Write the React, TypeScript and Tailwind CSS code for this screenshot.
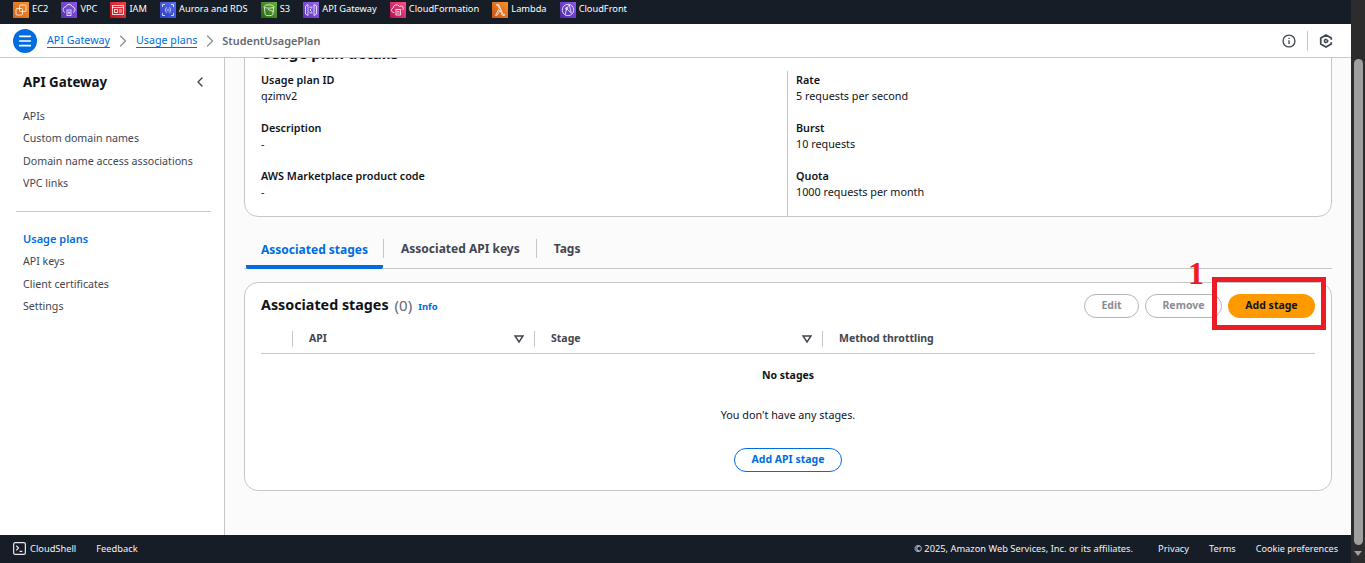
import { ChevronRight, ChevronLeft, Menu } from "lucide-react";

const services = [
  { name: "EC2", bg: "bg-linear-to-tr from-[#d0601c] to-[#f79327]", icon: "ec2" },
  { name: "VPC", bg: "bg-linear-to-tr from-[#5a30b5] to-[#8a5ae8]", icon: "vpc" },
  { name: "IAM", bg: "bg-linear-to-tr from-[#bd0816] to-[#f0404c]", icon: "iam" },
  { name: "Aurora and RDS", bg: "bg-linear-to-tr from-[#2e3fc0] to-[#5a6cf0]", icon: "rds" },
  { name: "S3", bg: "bg-linear-to-tr from-[#1b660f] to-[#6cae3e]", icon: "s3" },
  { name: "API Gateway", bg: "bg-linear-to-tr from-[#5a30b5] to-[#9a6af0]", icon: "api" },
  { name: "CloudFormation", bg: "bg-linear-to-tr from-[#b0084d] to-[#ff4f8b]", icon: "cf" },
  { name: "Lambda", bg: "bg-linear-to-tr from-[#c8511b] to-[#f79327]", icon: "lambda" },
  { name: "CloudFront", bg: "bg-linear-to-tr from-[#4d27a8] to-[#8a5ae8]", icon: "front" },
];

function ServiceGlyph({ icon }: { icon: string }) {
  const common = { fill: "none", stroke: "white", strokeWidth: 0.9, strokeOpacity: 0.85 };
  return (
    <svg viewBox="0 0 16 16" className="h-4 w-4" {...common}>
      {icon === "ec2" && (
        <>
          <rect x="6.500" y="3" width="6.500" height="6.500" rx="1" />
          <rect x="3" y="6.500" width="6.500" height="6.500" rx="1" />
        </>
      )}
      {icon === "vpc" && (
        <>
          <path d="M4 10.500a3 3 0 0 1 .8-5.800 3.500 3.500 0 0 1 6.600 0 3 3 0 0 1 .6 5.800" />
          <rect x="6" y="8" width="4" height="5.500" />
          <path d="M7.300 9.500v2.500M8.700 9.500v2.500" />
        </>
      )}
      {icon === "iam" && (
        <>
          <rect x="2.500" y="3.500" width="11" height="9" />
          <path d="M2.500 5.500h11" />
          <rect x="4.500" y="7.500" width="3" height="3" />
          <path d="M9 8h3M9 10h3" />
        </>
      )}
      {icon === "rds" && (
        <>
          <path d="M2.500 5V2.500H5M11 2.500h2.500V5M13.500 11v2.500H11M5 13.500H2.500V11" />
          <path d="M6.500 5.500C5.500 5.500 6.200 8 5.300 8c.9 0 .2 2.500 1.200 2.500M9.500 5.500c1 0 .3 2.500 1.200 2.500-.9 0-.2 2.500-1.200 2.500" />
          <path d="M8 6.800v2.400" />
        </>
      )}
      {icon === "s3" && (
        <>
          <ellipse cx="8" cy="4.500" rx="4.800" ry="1.700" />
          <path d="M3.200 4.500l1 8a3.800 1.200 0 0 0 7.600 0l1-8" />
          <path d="M7 7.500l5.500 2" />
        </>
      )}
      {icon === "api" && (
        <>
          <path d="M2.500 4l2.500-1.500v11L2.500 12zM13.500 4L11 2.500v11l2.500-1.500z" />
          <path d="M7.200 4.500v1.500M7.200 10v1.500M8.800 4.500v1.500M8.800 10v1.500M8.500 6.500L7 8l1.500 1.500" />
        </>
      )}
      {icon === "cf" && (
        <>
          <path d="M4.500 10.500H3.500a2.300 2.300 0 0 1-.3-4.500 3.300 3.300 0 0 1 6.200-1.500 2.500 2.500 0 0 1 3.500 3.500" />
          <rect x="6" y="7.500" width="4.500" height="5.500" />
          <path d="M7 9.300h2.500M7 11h2.500" />
        </>
      )}
      {icon === "lambda" && <path d="M3.500 13.300l3.800-6.800-1.500-3.300H4.500V2.700h2.300l4.200 9.600h1.500v1H10.300L8 8l-2.800 5.300z" />}
      {icon === "front" && (
        <>
          <circle cx="8" cy="8" r="5.700" />
          <path d="M5.200 12.800L6.500 6.500l2.800-3.500 2 8M6.500 6.500l4.800 4.500" />
          <circle cx="6.500" cy="6.500" r="1" />
        </>
      )}
    </svg>
  );
}

function Field({ label, value }: { label: string; value: string }) {
  return (
    <div className="h-[48px]">
      <div className="text-[10.800px] leading-[16px] font-semibold text-[#0f141a]">{label}</div>
      <div className="text-[10.800px] leading-[16px] text-[#0f141a]">{value}</div>
    </div>
  );
}

function NavLink({ label, active }: { label: string; active?: boolean }) {
  return (
    <div
      className={`leading-[16px] ${active ? "text-[11px] font-semibold text-[#006ce0]" : "text-[10.650px] text-[#424650]"}`}
    >
      {label}
    </div>
  );
}

function SortCaret() {
  return (
    <svg viewBox="0 0 10 8" className="h-2 w-2.5" fill="none" stroke="#424650" strokeWidth="1.500">
      <path d="M1 1h8L5 7z" />
    </svg>
  );
}

export default function App() {
  return (
    <div className="flex h-[563px] w-[1365px] overflow-hidden bg-[#fbfbfb] font-['Noto_Sans','Open_Sans',sans-serif]">
      <div className="flex h-full w-[1351px] flex-col">
        {/* Favorites bar */}
        <div className="flex h-[24px] shrink-0 items-center gap-[13.100px] bg-[#161d26] pl-[13px] pb-[5px] pt-[1px]">
          {services.map((s) => (
            <div key={s.name} className="flex items-center gap-[3px]">
              <span className={`flex h-4 w-4 items-center justify-center ${s.bg}`}>
                <ServiceGlyph icon={s.icon} />
              </span>
              <span className="mb-[3px] text-[9.250px] leading-[14px] text-white">{s.name}</span>
            </div>
          ))}
        </div>

        {/* Breadcrumbs */}
        <div className="flex h-[34px] shrink-0 items-center border-b border-[#c6c6cd] bg-white pl-[13px] pr-[18px]">
          <span className="mr-[10px] flex h-6 w-6 items-center justify-center rounded-full bg-[#006ce0]">
            <Menu className="h-4 w-4 text-white" strokeWidth={2.5} />
          </span>
          <span className="border-b border-[#006ce0] text-[10.700px] leading-[14px] text-[#006ce0]">API Gateway</span>
          <ChevronRight className="mx-[3px] h-5 w-5 text-[#8c8c94]" strokeWidth={1.500} />
          <span className="border-b border-[#006ce0] text-[10.700px] leading-[14px] text-[#006ce0]">Usage plans</span>
          <ChevronRight className="ml-[3px] mr-[2px] h-5 w-5 text-[#8c8c94]" strokeWidth={1.500} />
          <span className="text-[10.900px] leading-[14px] font-semibold text-[#656871]">StudentUsagePlan</span>
          <div className="ml-auto flex items-center">
            <svg viewBox="0 0 16 16" className="h-[14px] w-[14px]" fill="none" stroke="#424650" strokeWidth="1.500">
              <circle cx="8" cy="8" r="6.800" />
              <path d="M8 7v4.500M8 4.300v1.500" />
            </svg>
            <span className="mx-[11px] h-[20px] w-px bg-[#c6c6cd]" />
            <svg viewBox="0 0 16 16" className="h-[14px] w-[14px]" fill="none" stroke="#424650" strokeWidth="2">
              <path d="M14 6.500V4.700L8 1.200 2 4.700v6.600l6 3.500 6-3.500V9.500" />
              <path d="M8 5.500a2.500 2.500 0 1 0 0 5l2.500-1.500V7z" fill="#424650" strokeWidth="0.500" />
              <circle cx="8" cy="8" r="0.900" fill="white" stroke="none" />
            </svg>
          </div>
        </div>

        <div className="flex min-h-0 flex-1">
          {/* Sidebar */}
          <aside className="w-[225px] shrink-0 border-r border-[#c6c6cd] bg-white pl-[16px] pr-[13px]">
            <div className="flex items-center justify-between pl-[7px] pt-[14px] pr-[3px]">
              <span className="text-[13.300px] leading-[20px] font-bold text-[#0f141a]">API Gateway</span>
              <ChevronLeft className="h-4 w-4 text-[#424650]" strokeWidth={2} />
            </div>
            <div className="flex flex-col gap-[6.330px] pl-[7px] pt-[16px]">
              <NavLink label="APIs" />
              <NavLink label="Custom domain names" />
              <NavLink label="Domain name access associations" />
              <NavLink label="VPC links" />
            </div>
            <div className="mt-[20px] h-px bg-[#c6c6cd]" />
            <div className="flex flex-col gap-[6.330px] pl-[7px] pt-[19px]">
              <NavLink label="Usage plans" active />
              <NavLink label="API keys" />
              <NavLink label="Client certificates" />
              <NavLink label="Settings" />
            </div>
          </aside>

          {/* Main */}
          <main className="min-w-0 flex-1 overflow-hidden px-[19px]">
            <div className="relative -mt-[16px] flex h-[175px] rounded-b-[14px] border border-[#c6c6cd] bg-white pl-[16px]">
              <div className="absolute top-[1px] left-[16px] text-[15px] leading-[18px] font-bold text-[#0f141a]">
                Usage plan details
              </div>
              <div className="mt-[28px] w-[527px] border-r border-[#c6c6cd] pt-[1px]">
                <Field label="Usage plan ID" value="qzimv2" />
                <Field label="Description" value="-" />
                <Field label="AWS Marketplace product code" value="-" />
              </div>
              <div className="mt-[28px] pl-[8px] pt-[1px]">
                <Field label="Rate" value="5 requests per second" />
                <Field label="Burst" value="10 requests" />
                <Field label="Quota" value="1000 requests per month" />
              </div>
            </div>

            {/* Tabs */}
            <div className="mt-[16px] flex h-[36px] border-b border-[#c6c6cd] pl-[2px]">
              <div className="flex h-[36px] w-[137px] items-center justify-center rounded-[2px] border-b-[4px] border-[#006ce0] pt-[1px] text-[12px] font-bold text-[#006ce0]">
                Associated stages
              </div>
              <div className="mt-[6px] flex h-[19px] items-center border-l border-[#c6c6cd] pl-[17px] pr-[16px] text-[12px] font-bold text-[#424650]">
                Associated API keys
              </div>
              <div className="mt-[6px] flex h-[19px] items-center border-l border-[#c6c6cd] pl-[17px] text-[12px] font-bold text-[#424650]">
                Tags
              </div>
            </div>

            {/* Stages card */}
            <section className="mt-[13px] h-[209px] rounded-[14px] border border-[#c6c6cd] bg-white px-[16px]">
              <div className="flex items-center pt-[11px]">
                <h2 className="-mt-[3px] text-[14.300px] leading-[24px] font-bold text-[#0f141a]">Associated stages</h2>
                <span className="-mt-[3px] ml-[6px] text-[15px] leading-[24px] text-[#656871]">(0)</span>
                <span className="ml-[6px] pt-[3px] text-[9.500px] font-bold text-[#006ce0]">Info</span>
                <div className="ml-auto flex items-center gap-[6px]">
                  <button className="h-[24px] w-[55px] rounded-full border border-[#b4b4bb] text-[10.500px] font-bold text-[#8c8c94]">
                    Edit
                  </button>
                  <button className="h-[24px] w-[77px] rounded-full border border-[#b4b4bb] text-[10.500px] font-bold text-[#8c8c94]">
                    Remove
                  </button>
                  <button className="h-[24px] w-[87px] rounded-full bg-[#ff9900] text-[10.500px] font-bold text-[#0f141a]">
                    Add stage
                  </button>
                </div>
              </div>

              <div className="mt-[10px] flex h-[26px] items-center border-b border-[#c6c6cd] pb-[4px] text-[10.500px] font-bold text-[#424650]">
                <div className="ml-[31px] flex h-[16px] w-[242px] items-center justify-between border-l border-[#c6c6cd] pl-[16px] pr-[10px]">
                  API
                  <SortCaret />
                </div>
                <div className="flex h-[16px] w-[288px] items-center justify-between border-l border-[#c6c6cd] pl-[16px] pr-[10px]">
                  Stage
                  <SortCaret />
                </div>
                <div className="flex h-[16px] items-center border-l border-[#c6c6cd] pl-[16px]">Method throttling</div>
              </div>

              <div className="flex flex-col items-center pt-[13px]">
                <div className="text-[10.500px] leading-[16px] font-bold text-[#0f141a]">No stages</div>
                <div className="mt-[24px] text-[10.800px] leading-[16px] text-[#0f141a]">You don't have any stages.</div>
                <button className="mt-[25px] h-[24px] w-[108px] rounded-full border border-[#006ce0] text-[10.500px] font-bold text-[#006ce0]">
                  Add API stage
                </button>
              </div>
            </section>
          </main>
        </div>

        {/* Footer */}
        <footer className="flex h-[28px] shrink-0 items-center bg-[#161d26] pb-[1px] pl-[13px] pr-[13px] text-[9.300px] text-[#f3f3f7]">
          <svg viewBox="0 0 14 14" className="mr-[4px] h-[13px] w-[13px]" fill="none" stroke="#e8e8ec" strokeWidth="1.300">
            <rect x="0.700" y="0.700" width="12.600" height="12.600" rx="1.500" />
            <path d="M3.500 4l2.500 2.500L3.500 9M7 10h3" />
          </svg>
          <span>CloudShell</span>
          <span className="ml-[20px]">Feedback</span>
          <span className="ml-auto">© 2025, Amazon Web Services, Inc. or its affiliates.</span>
          <span className="ml-[25px]">Privacy</span>
          <span className="ml-[20px]">Terms</span>
          <span className="ml-[20px] text-[9.100px]">Cookie preferences</span>
        </footer>
      </div>

      {/* Browser scrollbar */}
      <div className="flex h-full w-[14px] shrink-0 flex-col items-center bg-[#2c2c2c]">
        <div className="mt-[59px] h-[486px] w-[9px] rounded-full bg-[#9f9f9f]" />
        <div className="mt-[6px] h-0 w-0 border-x-[4px] border-t-[5px] border-x-transparent border-t-[#9f9f9f]" />
      </div>

      {/* Annotation */}
      <div className="absolute left-[1212px] top-[277px] h-[53px] w-[114px] border-[5px] border-[#ed1c24]" />
      <div className="absolute left-[1188px] top-[255px] font-['Liberation_Serif',serif] text-[32px] leading-[36px] font-bold text-[#ed1c24]">
        1
      </div>
    </div>
  );
}
